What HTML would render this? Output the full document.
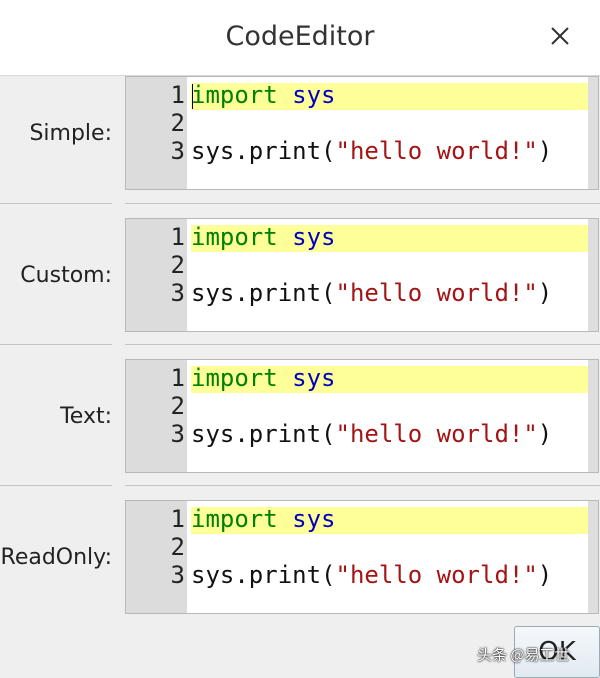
<!DOCTYPE html>
<html><head><style>
body{margin:0;width:600px;height:676px;background:#efefef;position:relative;overflow:hidden;font-family:"DejaVu Sans","Liberation Sans",sans-serif}
.title{position:absolute;left:0;top:0;width:600px;height:75px;background:#fff;border-bottom:1px solid #d8d8d8}
.title span{position:absolute;left:0;width:600px;top:21px;text-align:center;font-size:27px;color:#333}
.x{position:absolute;left:549px;top:25px}
.lab{position:absolute;right:488px;font-size:22px;color:#222}
.ed{position:absolute;left:125px;width:472px;height:112px;border:1px solid #b8b8b8;background:#fff;font-family:"DejaVu Sans Mono","Liberation Mono",monospace;font-size:24px}
.gut{position:absolute;left:0;top:0;width:61px;height:112px;background:#dcdcdc}
.sb{position:absolute;right:0;top:0;width:10px;height:112px;background:#dedede}
.hl{position:absolute;left:65px;top:6px;width:397px;height:27px;background:#ffff99}
.ln{position:absolute;left:0;width:59px;text-align:right;color:#222}
.code{position:absolute;left:65px;white-space:pre;color:#111}
.sep{position:absolute;height:1px;background:#c4c4c4}
.ok{position:absolute;left:514px;top:626px;width:84px;height:50px;border:1px solid #9ab;border-radius:3px;background:linear-gradient(#f4f8fb,#e2eaf1);font-size:26px;text-align:center;line-height:50px;color:#222}
.wm{position:absolute;left:477px;top:644px;font-family:"Noto Sans CJK SC",sans-serif;font-size:15px;color:#fff;text-shadow:0 0 2px #000,0 0 1px #000}
</style></head><body>
<div class="title"><span>CodeEditor</span>
<svg class="x" width="22" height="22" viewBox="0 0 22 22"><path d="M3 3L19 19M19 3L3 19" stroke="#333" stroke-width="2"/></svg></div>

<div class="lab" style="top:121px">Simple:</div>
<div class="lab" style="top:263px">Custom:</div>
<div class="lab" style="top:404px">Text:</div>
<div class="lab" style="top:545px">ReadOnly:</div>

<div class="sep" style="left:0;width:112px;top:203px"></div><div class="sep" style="left:125px;width:475px;top:203px"></div>
<div class="sep" style="left:0;width:112px;top:344px"></div><div class="sep" style="left:125px;width:475px;top:344px"></div>
<div class="sep" style="left:0;width:112px;top:485px"></div><div class="sep" style="left:125px;width:475px;top:485px"></div>

<div class="ed" style="top:76px"><div class="gut"></div><div class="sb"></div><div class="hl"></div>
<div class="ln" style="top:4px">1</div><div class="ln" style="top:32px">2</div><div class="ln" style="top:60px">3</div>
<div class="code" style="top:4px"><span style="color:#008000">import</span> <span style="color:#0000c0">sys</span></div>
<div style="position:absolute;left:66px;top:7px;width:1px;height:25px;background:#000"></div>
<div class="code" style="top:60px">sys.print(<span style="color:#a31515">"hello world!"</span>)</div></div>

<div class="ed" style="top:218px"><div class="gut"></div><div class="sb"></div><div class="hl"></div>
<div class="ln" style="top:4px">1</div><div class="ln" style="top:32px">2</div><div class="ln" style="top:60px">3</div>
<div class="code" style="top:4px"><span style="color:#008000">import</span> <span style="color:#0000c0">sys</span></div>
<div class="code" style="top:60px">sys.print(<span style="color:#a31515">"hello world!"</span>)</div></div>

<div class="ed" style="top:359px"><div class="gut"></div><div class="sb"></div><div class="hl"></div>
<div class="ln" style="top:4px">1</div><div class="ln" style="top:32px">2</div><div class="ln" style="top:60px">3</div>
<div class="code" style="top:4px"><span style="color:#008000">import</span> <span style="color:#0000c0">sys</span></div>
<div class="code" style="top:60px">sys.print(<span style="color:#a31515">"hello world!"</span>)</div></div>

<div class="ed" style="top:500px"><div class="gut"></div><div class="sb"></div><div class="hl"></div>
<div class="ln" style="top:4px">1</div><div class="ln" style="top:32px">2</div><div class="ln" style="top:60px">3</div>
<div class="code" style="top:4px"><span style="color:#008000">import</span> <span style="color:#0000c0">sys</span></div>
<div class="code" style="top:60px">sys.print(<span style="color:#a31515">"hello world!"</span>)</div></div>

<div class="ok">OK</div>
<div class="wm">头条 @易工世</div>
</body></html>
